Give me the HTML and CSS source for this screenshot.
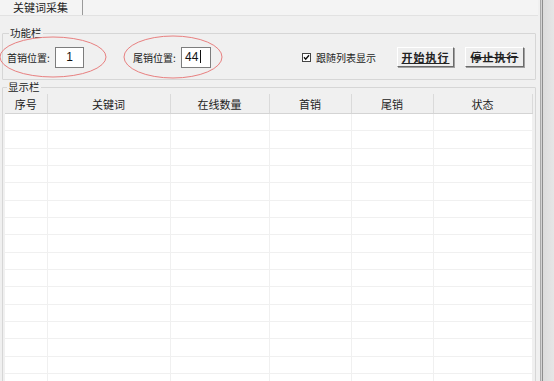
FILE: index.html
```html
<!doctype html>
<html lang="zh-CN">
<head>
<meta charset="utf-8">
<title>关键词采集</title>
<link rel="stylesheet" href="styles.css">
</head>
<body>
<div class="window">
  <div class="main">
    <div class="tabs"><span class="tab">关键词采集</span></div>

    <fieldset class="group">
      <legend>功能栏</legend>
      <div class="toolbar">
        <label class="field"><span class="lbl">首销位置:</span><span class="input center">1</span></label>
        <label class="field second"><span class="lbl">尾销位置:</span><span class="input">44<i class="caret"></i></span></label>
        <label class="check">
          <svg class="box" width="9" height="9" viewBox="0 0 9 9"><rect x="0.5" y="0.5" width="8" height="8" /><path d="M2 4.3 L3.7 6.2 L7 2.2" /></svg>
          跟随列表显示
        </label>
        <button class="btn start">开始执行</button>
        <button class="btn stop">停止执行</button>
      </div>
    </fieldset>

    <fieldset class="group list">
      <legend>显示栏</legend>
      <div class="grid">
        <table>
          <colgroup>
            <col style="width:42px"><col style="width:123px"><col style="width:99px">
            <col style="width:82px"><col style="width:82px"><col style="width:99px">
          </colgroup>
          <thead>
            <tr><th>序号</th><th>关键词</th><th>在线数量</th><th>首销</th><th>尾销</th><th>状态</th></tr>
          </thead>
          <tbody>
            <tr><td></td><td></td><td></td><td></td><td></td><td></td></tr>
            <tr><td></td><td></td><td></td><td></td><td></td><td></td></tr>
            <tr><td></td><td></td><td></td><td></td><td></td><td></td></tr>
            <tr><td></td><td></td><td></td><td></td><td></td><td></td></tr>
            <tr><td></td><td></td><td></td><td></td><td></td><td></td></tr>
            <tr><td></td><td></td><td></td><td></td><td></td><td></td></tr>
            <tr><td></td><td></td><td></td><td></td><td></td><td></td></tr>
            <tr><td></td><td></td><td></td><td></td><td></td><td></td></tr>
            <tr><td></td><td></td><td></td><td></td><td></td><td></td></tr>
            <tr><td></td><td></td><td></td><td></td><td></td><td></td></tr>
            <tr><td></td><td></td><td></td><td></td><td></td><td></td></tr>
            <tr><td></td><td></td><td></td><td></td><td></td><td></td></tr>
            <tr><td></td><td></td><td></td><td></td><td></td><td></td></tr>
            <tr><td></td><td></td><td></td><td></td><td></td><td></td></tr>
            <tr><td></td><td></td><td></td><td></td><td></td><td></td></tr>
            <tr><td></td><td></td><td></td><td></td><td></td><td></td></tr>
          </tbody>
        </table>
      </div>
    </fieldset>
  </div>
  <div class="edge"></div>

  <svg class="marks" width="554" height="100" viewBox="0 0 554 100">
    <ellipse cx="53" cy="57" rx="53" ry="20" />
    <ellipse cx="173" cy="57" rx="49" ry="21" />
  </svg>
</div>
</body>
</html>
```

FILE: styles.css
```css
html, body { margin: 0; padding: 0; background: #f0f0f0; }
body { font-family: "Noto Sans CJK SC", "DejaVu Sans", sans-serif; font-size: 10px; color: #222; overflow: hidden; }

.window { position: relative; display: flex; width: 554px; height: 381px; overflow: hidden; }
.main { width: 538px; flex: none; }
.edge { flex: 1; background: linear-gradient(90deg, #f0f0f0 0 2px, #a9a9a9 2px 3px, #d4d4d4 3px 4px, #8e8e8e 4px 5px, #dcdcdc 5px, #e6e6e6); }

.tabs { height: 15px; border-bottom: 1px solid #e2e2e2; background: #f4f4f4; }
.tab { display: inline-block; width: 69px; height: 15px; padding-left: 13px; line-height: 14px; font-size: 11px; border-right: 1px solid #9a9a9a; }

.group { margin: 11px 2px 0; padding: 0 0 0 4px; border: 1px solid #d6d6d6; border-radius: 1px; }
.group legend { padding: 0 1px; margin-left: 2px; line-height: 12px; font-size: 10.5px; color: #222; }

.toolbar { display: flex; align-items: center; height: 22px; padding: 7px 0 11px; }
.field { display: flex; align-items: center; white-space: nowrap; }
.lbl { width: 48px; }
.second { margin-left: 49px; }
.input { display: inline-block; box-sizing: border-box; width: 29px; height: 21px; padding-left: 3px; border: 1px solid #7d7d7d; background: #fff; font-family: "Liberation Sans", sans-serif; font-size: 12px; line-height: 19px; color: #111; }
.input.center { text-align: center; padding-left: 0; }
.second .input { width: 30px; }
.caret { display: inline-block; width: 1px; height: 13px; margin-left: 2px; vertical-align: -2px; background: #111; }

.check { display: flex; align-items: center; margin-left: 91px; white-space: nowrap; }
.box { margin-right: 5px; }
.box rect { fill: #fff; stroke: #444; stroke-width: 1; }
.box path { fill: none; stroke: #111; stroke-width: 1.4; }

.btn { box-sizing: border-box; height: 20px; padding: 0; background: #eeeeee; border: 1px solid; border-color: #fff #6b6b6b #6b6b6b #fff; box-shadow: 1px 1px 0 #a0a0a0; font-family: "Noto Sans CJK SC", sans-serif; font-size: 11px; font-weight: bold; letter-spacing: 1px; color: #222; }
.start { width: 57px; margin-left: 21px; text-decoration: underline; }
.stop { width: 59px; margin-left: 11px; text-decoration: line-through; }

.list { margin-top: 1px; padding: 0 2px; height: 400px; }
.grid { margin-top: 1px; width: 527px; background: #fff; }
table { border-collapse: collapse; table-layout: fixed; width: 527px; }
th { height: 19px; padding: 0; background: #f0f0f0; border-right: 1px solid #dadada; border-bottom: 1px solid #d4d4d4; font-weight: normal; font-size: 11px; line-height: 18px; text-align: center; color: #222; }
td { height: 16.33px; padding: 0; border-right: 1px solid #f0f0f0; border-bottom: 1px solid #f0f0f0; }

.marks { position: absolute; top: 0; left: 0; pointer-events: none; }
.marks ellipse { fill: none; stroke: #e88080; stroke-width: 1; }
```
